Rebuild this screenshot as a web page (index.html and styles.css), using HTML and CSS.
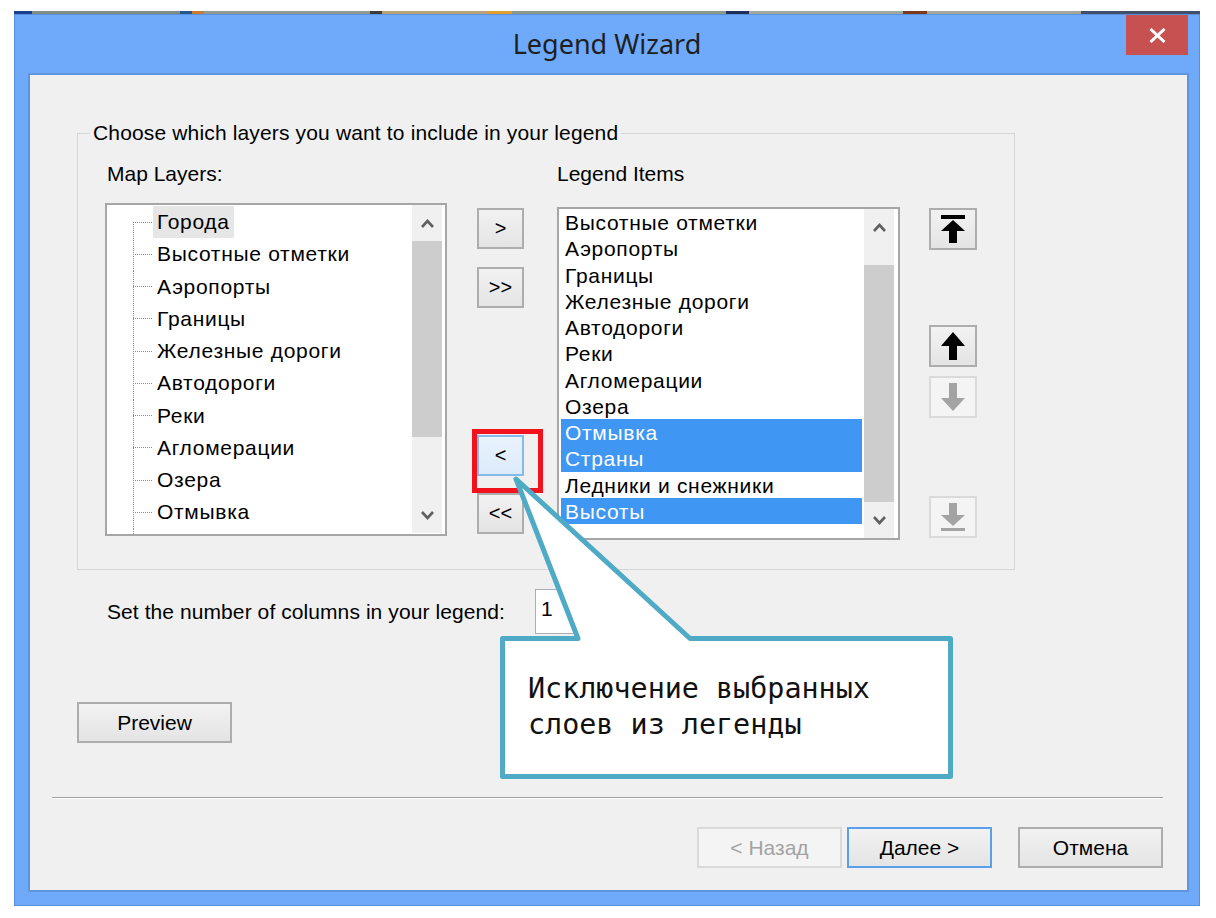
FILE: index.html
```html
<!DOCTYPE html>
<html lang="ru">
<head>
<meta charset="utf-8">
<title>Legend Wizard</title>
<link rel="stylesheet" href="styles.css">
</head>
<body>
<div class="desktop-strip"></div>
<div class="window">
  <div class="titlebar">
    <div class="title">Legend Wizard</div>
    <div class="title-actions">
      <button class="close-btn" aria-label="Close">
        <svg width="17" height="15" viewBox="0 0 17 15"><path d="M1.5 1 L15.5 14 M15.5 1 L1.5 14" stroke="#fff" stroke-width="3" fill="none"/></svg>
      </button>
    </div>
  </div>
  <div class="client">
    <fieldset class="group">
      <legend>Choose which layers you want to include in your legend</legend>
      <div class="group-body">
        <div class="col col-left">
          <div class="col-label">Map Layers:</div>
          <div class="listbox">
            <ul class="tree">
              <li class="first"><span class="item sel-inactive">Города</span></li>
              <li><span class="item">Высотные отметки</span></li>
              <li><span class="item">Аэропорты</span></li>
              <li><span class="item">Границы</span></li>
              <li><span class="item">Железные дороги</span></li>
              <li><span class="item">Автодороги</span></li>
              <li><span class="item">Реки</span></li>
              <li><span class="item">Агломерации</span></li>
              <li><span class="item">Озера</span></li>
              <li><span class="item">Отмывка</span></li>
              <li class="stub"></li>
            </ul>
            <div class="scrollbar sb-left">
              <div class="sb-arrow"><svg width="13" height="9" viewBox="0 0 13 9"><polyline points="1,8 6.5,2 12,8" fill="none" stroke="#606060" stroke-width="2.6"/></svg></div>
              <div class="sb-track"><div class="sb-thumb"></div></div>
              <div class="sb-arrow"><svg width="13" height="9" viewBox="0 0 13 9"><polyline points="1,1 6.5,7 12,1" fill="none" stroke="#606060" stroke-width="2.6"/></svg></div>
            </div>
          </div>
        </div>
        <div class="col col-mid">
          <button class="btn btn-sm b1">&gt;</button>
          <button class="btn btn-sm b2">&gt;&gt;</button>
          <button class="btn btn-sm b3 btn-focus">&lt;</button>
          <button class="btn btn-sm b4">&lt;&lt;</button>
        </div>
        <div class="col col-right">
          <div class="col-label">Legend Items</div>
          <div class="listbox">
            <ul class="items">
              <li>Высотные отметки</li>
              <li>Аэропорты</li>
              <li>Границы</li>
              <li>Железные дороги</li>
              <li>Автодороги</li>
              <li>Реки</li>
              <li>Агломерации</li>
              <li>Озера</li>
              <li class="sel">Отмывка</li>
              <li class="sel">Страны</li>
              <li>Ледники и снежники</li>
              <li class="sel">Высоты</li>
            </ul>
            <div class="scrollbar sb-right">
              <div class="sb-arrow"><svg width="13" height="9" viewBox="0 0 13 9"><polyline points="1,8 6.5,2 12,8" fill="none" stroke="#606060" stroke-width="2.6"/></svg></div>
              <div class="sb-track"><div class="sb-thumb"></div></div>
              <div class="sb-arrow"><svg width="13" height="9" viewBox="0 0 13 9"><polyline points="1,1 6.5,7 12,1" fill="none" stroke="#606060" stroke-width="2.6"/></svg></div>
            </div>
          </div>
        </div>
        <div class="col col-btns">
          <button class="btn btn-icon i1" aria-label="Move to top">
            <svg width="24" height="28" viewBox="0 0 24 28"><rect x="0" y="0" width="24" height="4" fill="#000"/><polygon points="12,5 24,16 0,16" fill="#000"/><rect x="8" y="16" width="8" height="12" fill="#000"/></svg>
          </button>
          <button class="btn btn-icon i2" aria-label="Move up">
            <svg width="24" height="28" viewBox="0 0 24 28"><polygon points="12,0 24,14 0,14" fill="#000"/><rect x="8" y="14" width="8" height="14" fill="#000"/></svg>
          </button>
          <button class="btn btn-icon i3 disabled" aria-label="Move down">
            <svg width="24" height="28" viewBox="0 0 24 28"><rect x="8" y="0" width="8" height="15" fill="#a3a3a3"/><polygon points="0,15 24,15 12,28" fill="#a3a3a3"/></svg>
          </button>
          <button class="btn btn-icon i4 disabled" aria-label="Move to bottom">
            <svg width="24" height="28" viewBox="0 0 24 28"><rect x="8" y="0" width="8" height="12" fill="#a3a3a3"/><polygon points="0,12 24,12 12,23" fill="#a3a3a3"/><rect x="0" y="25" width="24" height="3" fill="#a3a3a3"/></svg>
          </button>
        </div>
      </div>
    </fieldset>

    <div class="cols-row">
      <label class="cols-label" for="ncols">Set the number of columns in your legend:</label>
      <input class="num-input" id="ncols" type="text" value="1">
    </div>

    <button class="btn btn-preview">Preview</button>

    <div class="separator"></div>

    <div class="footer">
      <button class="btn btn-nav btn-disabled">&lt; Назад</button>
      <button class="btn btn-nav btn-default">Далее &gt;</button>
      <button class="btn btn-nav btn-cancel">Отмена</button>
    </div>
  </div>
</div>

<div class="callout">
  <svg class="callout-shape" width="458" height="308" viewBox="0 0 458 308">
    <path d="M4.5 164.5 H80 L18 5 L192 164.5 H452.5 V302.5 H4.5 Z" fill="#fff" stroke="#4eaac5" stroke-width="5" stroke-linejoin="round"/>
  </svg>
  <p class="callout-text">Исключение выбранных<br>слоев из легенды</p>
</div>
</body>
</html>
```

FILE: styles.css
```css
* { box-sizing: border-box; }

html, body {
  margin: 0;
  padding: 0;
}

body {
  width: 1216px;
  height: 918px;
  overflow: hidden;
  background: #ffffff;
  font-family: "Liberation Sans", Arial, sans-serif;
  font-size: 21px;
  color: #000;
  position: relative;
}

.desktop-strip {
  height: 3px;
  width: 1186px;
  margin: 11px 0 0 14px;
  background: linear-gradient(90deg,
    #1b3d8f 0 1.5%, #7f8d86 1.5% 14%, #27578e 14% 15%, #c87a30 15% 16%,
    #8e9a92 16% 30%, #3b3b3b 30% 31%, #b9a27a 31% 40%, #e0a030 40% 42%,
    #8c9a8e 42% 60%, #1f2f5a 60% 62%, #a0a8a0 62% 75%, #7b3a20 75% 77%,
    #a6a6a0 77% 90%, #40506a 90% 100%);
}

.window {
  margin-left: 14px;
  width: 1186px;
  height: 892px;
  background: #6eaaf9;
  border: 1px solid #5a8fd9;
  display: flex;
  flex-direction: column;
}

.titlebar {
  height: 58px;
  display: grid;
  grid-template-columns: 1fr auto 1fr;
}

.title {
  grid-column: 2;
  font-family: "Noto Sans", "Open Sans", sans-serif;
  font-size: 27px;
  line-height: 58px;
  color: #1f1f1f;
  white-space: nowrap;
}

.title-actions {
  grid-column: 3;
  display: flex;
  justify-content: flex-end;
  align-items: flex-start;
  padding-right: 11px;
}

.close-btn {
  width: 62px;
  height: 40px;
  background: #c75050;
  border: none;
  padding: 0;
  display: flex;
  align-items: center;
  justify-content: center;
}

.client {
  margin: 0 10px 0 13px;
  height: 819px;
  border: 2px solid #5f95de;
  background: #f0f0f0;
  display: flex;
  flex-direction: column;
  align-items: flex-start;
}

/* group box */
.group {
  margin: 47px 0 0 47px;
  padding: 0;
  width: 938px;
  min-inline-size: 0;
  border: 1px solid #d5d5d5;
}

.group legend {
  margin-left: 12px;
  padding: 0 3px;
  line-height: 22px;
  font-size: 21px;
  letter-spacing: 0.15px;
  white-space: nowrap;
}

.group-body {
  display: flex;
  align-items: flex-start;
  padding: 18px 0 29px 27px;
}

.col { display: flex; flex-direction: column; }

.col-label {
  height: 24px;
  line-height: 24px;
  white-space: nowrap;
}

.col-left { width: 342px; }
.col-left .col-label { padding-left: 2px; }
.col-left .listbox { margin-top: 17px; }

.col-right { width: 343px; margin-left: 33px; }
.col-right .listbox { margin-top: 21px; }

.listbox {
  height: 333px;
  border: 2px solid #a6a6a6;
  background: #fff;
  display: flex;
  overflow: hidden;
}

/* tree list */
.tree {
  list-style: none;
  margin: 0;
  padding: 1px 0 0 26px;
  flex: 1;
  overflow: hidden;
  letter-spacing: 0.7px;
}

.tree li {
  height: 32.25px;
  line-height: 32.25px;
  padding-left: 20px;
  white-space: nowrap;
  background-image:
    repeating-linear-gradient(90deg, #8a8a8a 0 1px, transparent 1px 2px),
    repeating-linear-gradient(180deg, #8a8a8a 0 1px, transparent 1px 2px);
  background-repeat: no-repeat;
  background-size: 19px 1px, 1px 100%;
  background-position: 0 50%, 0 0;
}

.tree li.first {
  background-size: 19px 1px, 1px 50%;
  background-position: 0 50%, 0 100%;
}

.tree li.stub {
  background-size: 0 0, 1px 100%;
}

.tree .item {
  display: inline-block;
  padding: 0 4px;
}

.sel-inactive { background: #e6e6e6; }

/* item list */
.items {
  list-style: none;
  margin: 0;
  padding: 0 2px;
  flex: 1;
  overflow: hidden;
  letter-spacing: 0.7px;
}

.items li {
  height: 26.25px;
  line-height: 28px;
  padding-left: 4px;
  white-space: nowrap;
  overflow: hidden;
}

.items li.sel {
  background: #3f97f3;
  color: #fff;
}

/* scrollbars */
.scrollbar {
  width: 30px;
  flex: none;
  display: flex;
  flex-direction: column;
  background: #f0f0f0;
}

.sb-arrow {
  height: 36px;
  flex: none;
  display: flex;
  align-items: center;
  justify-content: center;
}

.sb-track { flex: 1; }
.sb-thumb { background: #cdcdcd; }

.sb-left { margin: 0 3px 1px 0; }
.sb-left .sb-thumb { height: 196px; }

.sb-right { margin: 0 4px 0 0; }
.sb-right .sb-thumb { margin-top: 20px; height: 237px; }

/* buttons */
.btn {
  font-family: "Liberation Sans", Arial, sans-serif;
  font-size: 21px;
  color: #000;
  background: linear-gradient(#f2f2f2, #e4e4e4);
  border: 2px solid #adadad;
  padding: 0;
}

.col-mid { margin-left: 30px; width: 47px; }

.btn-sm {
  width: 47px;
  height: 41px;
  font-size: 20px;
}

.b1 { margin-top: 46px; }
.b2 { margin-top: 18px; }
.b3 { margin-top: 127px; }
.b4 { margin-top: 17px; }

.btn-focus {
  position: relative;
  background: linear-gradient(#e9f3fd, #dcebfb);
  border-color: #86b9ec;
}

.btn-focus::after {
  content: "";
  position: absolute;
  left: -7px;
  top: -8px;
  width: 61px;
  height: 54px;
  border: 5px solid #f2121c;
}

.col-btns { margin-left: 29px; width: 48px; }

.btn-icon {
  width: 48px;
  height: 42px;
  display: flex;
  align-items: center;
  justify-content: center;
}

.btn-icon.disabled {
  background: #f4f4f4;
  border-color: #dadada;
}

.i1 { margin-top: 46px; }
.i2 { margin-top: 75px; }
.i3 { margin-top: 9px; }
.i4 { margin-top: 78px; }

/* columns row */
.cols-row {
  margin: 19px 0 0 77px;
  display: flex;
  align-items: center;
}

.cols-label {
  width: 428px;
  white-space: nowrap;
  letter-spacing: 0.08px;
}

.num-input {
  width: 56px;
  height: 45px;
  border: 1px solid #abadb3;
  background: #fff;
  font-family: "Liberation Sans", Arial, sans-serif;
  font-size: 21px;
  color: #000;
  padding: 0 0 5px 5px;
}

.btn-preview {
  margin: 68px 0 0 47px;
  width: 155px;
  height: 41px;
}

.separator {
  margin: 54px 0 0 22px;
  width: 1111px;
  height: 2px;
  border-top: 1px solid #a0a0a0;
  border-bottom: 1px solid #ffffff;
}

.footer {
  margin-top: 28px;
  align-self: stretch;
  display: flex;
  justify-content: flex-end;
  padding-right: 24px;
}

.btn-nav {
  width: 145px;
  height: 41px;
}

.btn-default { margin-left: 5px; border-color: #5a9fe9; }
.btn-cancel { margin-left: 26px; }

.btn-disabled {
  color: #a3a3a3;
  background: #f4f4f4;
  border-color: #dadada;
}

/* callout annotation */
.callout {
  position: absolute;
  left: 498px;
  top: 474px;
  width: 458px;
  height: 308px;
}

.callout-shape {
  position: absolute;
  left: 0;
  top: 0;
}

.callout-text {
  position: relative;
  margin: 0;
  padding: 197px 0 0 30px;
  font-family: "DejaVu Sans Mono", "Liberation Mono", monospace;
  font-size: 28.4px;
  line-height: 36px;
  color: #111;
  white-space: nowrap;
}
```
